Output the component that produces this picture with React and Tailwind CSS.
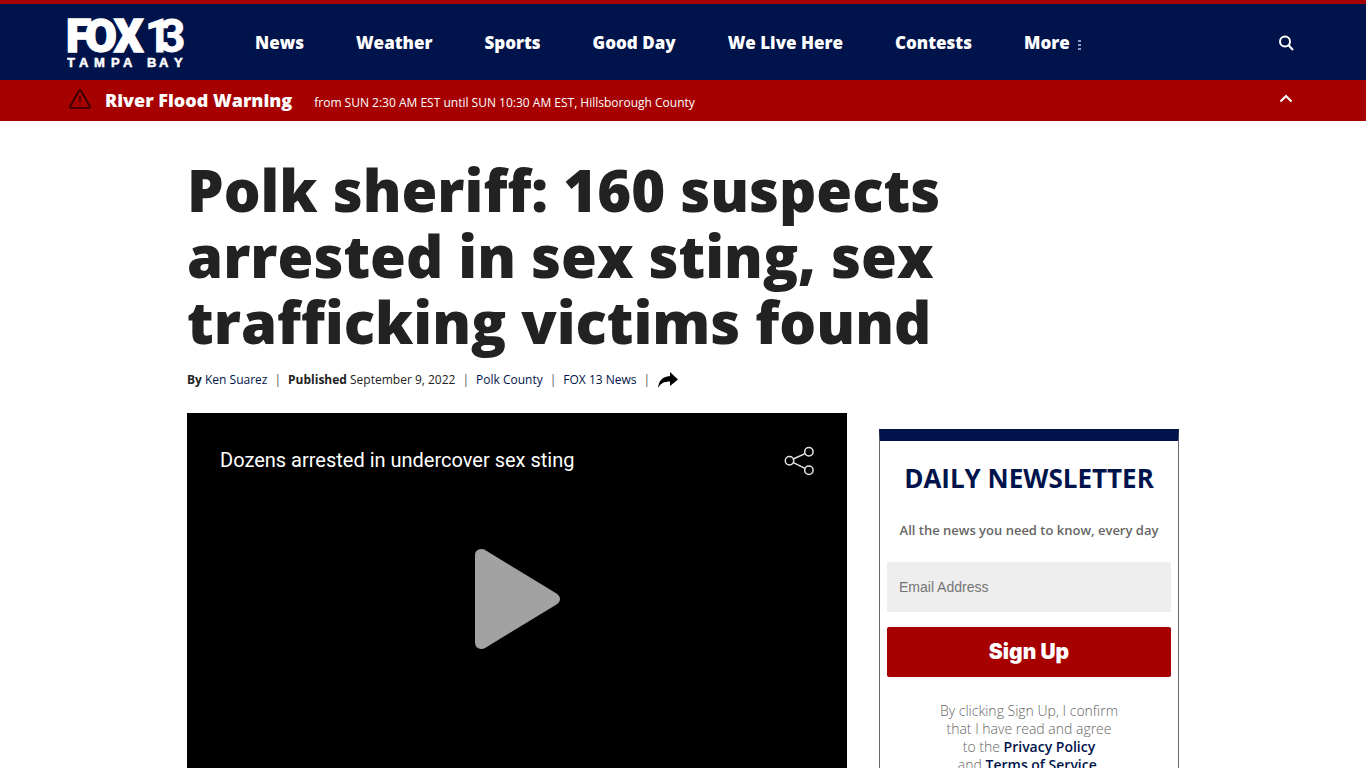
import React from 'react';

const NAV = [
  'News',
  'Weather',
  'Sports',
  'Good Day',
  'We Live Here',
  'Contests',
];

function Logo() {
  return (
    <svg width="118" height="52" viewBox="0 0 118 52" fill="#fff" stroke="#fff" role="img" aria-label="FOX 13 Tampa Bay">
      <g fontFamily="Roboto, sans-serif" fontSize="46">
        <text y="35" x="-1 18 47" fontWeight="900" strokeWidth="1.5">FOX</text>
        <text y="35" x="78 92" fontWeight="700" strokeWidth=".8">13</text>
      </g>
      <text
        y="50"
        x="0 12 27 44 56 70 80 92 107"
        fontFamily="'Liberation Sans', sans-serif"
        fontWeight="700"
        fontSize="13"
        strokeWidth=".5"
      >
        TAMPA BAY
      </text>
    </svg>
  );
}

function SearchIcon() {
  return (
    <svg width="16" height="16" viewBox="0 0 16 16" fill="none" stroke="currentColor" strokeWidth="2">
      <circle cx="7" cy="6.5" r="5" />
      <path d="M10.6 10.2L15 15" />
    </svg>
  );
}

function WarningIcon() {
  return (
    <svg width="22" height="20" viewBox="0 0 22 20" fill="none" stroke="#2b0000" strokeWidth="1.7" strokeLinejoin="round">
      <path d="M10.2 1.4L1.2 17.2q-.6 1.8 1 1.8h17.6q1.6 0 1-1.8L11.8 1.4q-.8-1-1.6 0z" />
      <path d="M11 7v6M11 14.5v1.500" strokeWidth="1.3" />
    </svg>
  );
}

function Header() {
  return (
    <header className="border-t-4 border-[#a60000] bg-[#00144b] text-white">
      <div className="flex h-[76px] items-center px-[67px] pt-0.5">
        <a href="#home" className="mr-[70px] shrink-0">
          <Logo />
        </a>
        <nav className="flex items-center gap-[52px] text-[17px] leading-6 font-extrabold whitespace-nowrap">
          {NAV.map((label) => (
            <a key={label} href="#section">{label}</a>
          ))}
          <button type="button" className="flex items-center gap-2">
            More
            <svg width="4" height="12" viewBox="0 0 4 12" fill="#8f9bc4" className="mt-1">
              <path d="M0 1h3v2H0zM0 5h3v2H0zM0 9h3v2H0z" />
            </svg>
          </button>
        </nav>
        <button type="button" aria-label="Search" className="mr-[5px] ml-auto">
          <SearchIcon />
        </button>
      </div>
    </header>
  );
}

function AlertBar() {
  return (
    <div className="flex h-[41px] items-center bg-[#a60000] px-[67px] pb-0.5 text-white">
      <span className="mr-3.5 ml-0.5 pb-0.5">
        <WarningIcon />
      </span>
      <a href="#alert" className="flex items-baseline gap-[22px]">
        <strong className="text-lg font-extrabold">River Flood Warning</strong>
        <span className="text-xs">from SUN 2:30 AM EST until SUN 10:30 AM EST, Hillsborough County</span>
      </a>
      <button type="button" aria-label="Collapse alerts" className="mr-[5px] ml-auto pb-0.5">
        <svg width="16" height="12" viewBox="0 0 16 12" fill="none" stroke="currentColor" strokeWidth="2">
          <path d="M2.5 8.5L8 3l5.500 5.500" />
        </svg>
      </button>
    </div>
  );
}

function Byline() {
  return (
    <div className="mt-[15px] flex items-center text-xs leading-5 text-[#222]">
      <p>
        <b>By</b> <a href="#author" className="text-[#00144b]">Ken Suarez</a>
      </p>
      <span className="mx-[7px] text-[#555]">|</span>
      <p>
        <b>Published</b> September 9, 2022
      </p>
      <span className="mx-[7px] text-[#555]">|</span>
      <a href="#polk" className="text-[#00144b]">Polk County</a>
      <span className="mx-[7px] text-[#555]">|</span>
      <a href="#fox13" className="text-[#00144b]">FOX 13 News</a>
      <span className="mx-[7px] text-[#555]">|</span>
      <button type="button" aria-label="Share">
        <svg width="22" height="18" viewBox="0 0 22 18" fill="#000">
          <path d="M13 1l8 7.500-8 6.500v-4.500C7 10.500 3.500 12.500 1 17 1.500 10.500 5 5.500 13 5z" />
        </svg>
      </button>
    </div>
  );
}

function Player() {
  return (
    <div className="relative h-[371px] bg-black text-white">
      <div className="flex items-start justify-between px-[33px] pt-[33px]">
        <p className="font-[Roboto,sans-serif] text-xl leading-7">Dozens arrested in undercover sex sting</p>
        <button type="button" aria-label="Share video">
          <svg width="30" height="30" viewBox="0 0 30 30" fill="none" stroke="#e5e5e5" strokeWidth="1.5">
            <circle cx="5.500" cy="14.800" r="4.200" />
            <circle cx="24.900" cy="5.800" r="4.200" />
            <circle cx="24.900" cy="24.200" r="4.200" />
            <path d="M9.300 13L21.100 7.600M9.300 16.600L21.100 22.400" />
          </svg>
        </button>
      </div>
      <button type="button" aria-label="Play" className="absolute inset-0 flex items-center justify-center">
        <svg width="85" height="100" viewBox="0 0 85 100" fill="#a2a2a2">
          <path d="M0 6.500Q0 0 6.500 0q2 0 4 1.300L81.500 44.500Q85 47 85 50t-3.500 5.500L10.500 98.700Q8.500 100 6.500 100 0 100 0 93.500z" />
        </svg>
      </button>
    </div>
  );
}

function Newsletter() {
  return (
    <aside className="mt-4 w-[300px] shrink-0 border-x border-t-12 border-x-[#666] border-t-[#00144b] px-[7px] pb-8 text-center">
      <h2 className="mt-[19px] text-[26px] leading-9 font-bold text-[#00144b]">DAILY NEWSLETTER</h2>
      <p className="mt-6 text-[13px] leading-5 font-semibold text-[#666]">All the news you need to know, every day</p>
      <form onSubmit={(e) => e.preventDefault()}>
        <input
          type="email"
          aria-label="Email Address"
          placeholder="Email Address"
          className="mt-[22px] block h-[50px] w-full bg-[#eee] px-3 font-['Liberation_Sans',sans-serif] text-sm placeholder:text-[#757575]"
        />
        <button
          type="submit"
          className="mt-[15px] block h-[50px] w-full rounded-xs bg-[#a60000] font-[Inter,sans-serif] text-[21px] font-black text-white"
        >
          Sign Up
        </button>
      </form>
      <p className="mx-auto mt-[25px] w-[180px] text-sm leading-[18px] font-light text-[#666]">
        By clicking Sign Up, I confirm that I have read and agree to the{' '}
        <a href="#privacy" className="font-semibold text-[#00144b]">Privacy Policy</a>
        <br />
        and <a href="#terms" className="font-semibold text-[#00144b]">Terms of Service</a>.
      </p>
    </aside>
  );
}

export default function App() {
  return (
    <div className="h-screen overflow-hidden bg-white font-['Open_Sans',sans-serif]">
      <Header />
      <AlertBar />
      <main className="mx-auto max-w-[992px] pt-9">
        <h1 className="text-[58px] leading-[66px] font-extrabold text-[#222]">
          Polk sheriff: 160 suspects arrested in sex sting, sex trafficking victims found
        </h1>
        <Byline />
        <div className="mt-[23px] flex gap-8">
          <div className="min-w-0 flex-1">
            <Player />
          </div>
          <Newsletter />
        </div>
      </main>
    </div>
  );
}
